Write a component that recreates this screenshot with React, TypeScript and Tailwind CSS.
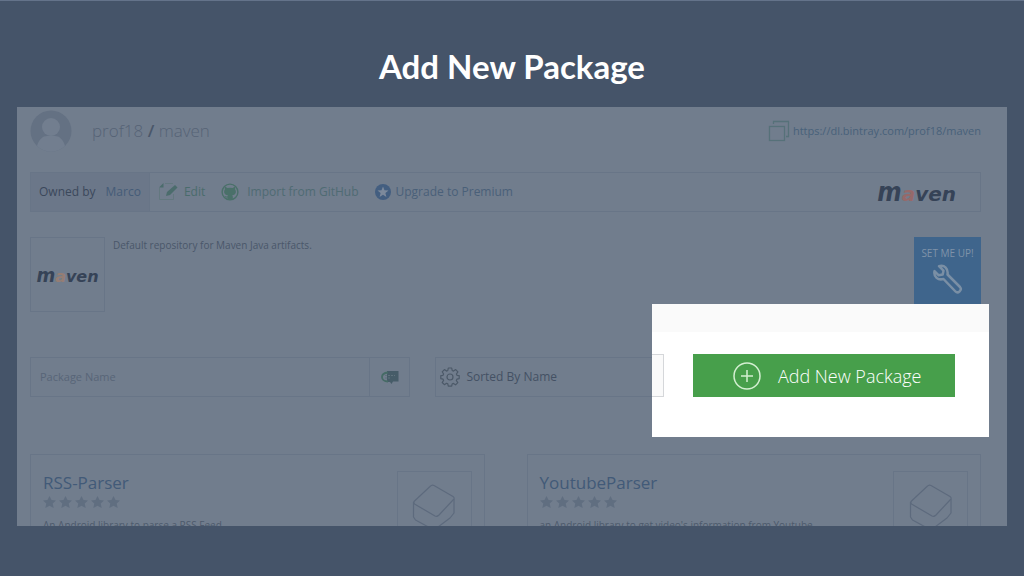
import React from "react";

const packages = [
  { name: "RSS-Parser", description: "An Android library to parse a RSS Feed" },
  { name: "YoutubeParser", description: "an Android library to get video's information from Youtube" },
];

const Avatar = () => (
  <svg className="h-[42px] w-[42px] shrink-0" viewBox="0 0 42 42" aria-hidden="true">
    <circle cx="21" cy="21" r="20.5" fill="#647183" />
    <circle cx="21" cy="17" r="9" fill="#727e8f" />
    <path d="M7 36c2-7 6-10 10-10h8c4 0 8 3 10 10a20 20 0 0 1-28 0z" fill="#727e8f" />
  </svg>
);

const CopyIcon = () => (
  <svg className="h-[22px] w-[22px]" viewBox="0 0 22 22" fill="none" stroke="#567179" strokeWidth="1.300" aria-hidden="true">
    <path d="M5.500 4V1.500h15v15H18" />
    <rect x="1.500" y="6.500" width="15" height="14" />
  </svg>
);

const EditIcon = () => (
  <svg className="h-5 w-5" viewBox="0 0 20 20" fill="none" aria-hidden="true">
    <path d="M7 1.500h8M1.500 6v11.500h14V12" stroke="#63787f" />
    <path d="M1 5.500L5.500 1v4.500z" fill="#4b6c6c" />
    <path d="M8 14l1-4 8-7 2.500 2.500-7.500 7.500z" fill="#4b6c6c" />
  </svg>
);

const GithubIcon = () => (
  <svg className="h-[18px] w-[18px]" viewBox="0 0 18 18" aria-hidden="true">
    <circle cx="9" cy="9" r="7.900" fill="none" stroke="#4a7069" strokeWidth="1.400" />
    <path
      d="M4.200 3.800l2.300 1.200a9 9 0 0 1 5 0l2.300-1.200c.5 1 .4 1.900.2 2.400 2 3 .5 5.800-2.800 6.100.5.600.6 1 .6 1.800V16.500H6.500v-2c-2 .2-2.500-1-3-1.800 1 .2 1.600 1 3 .8 0-.5.200-.9.500-1.200C3.600 12 2 9.200 4 6.200c-.2-.5-.3-1.400.2-2.400z"
      fill="#4a7069"
    />
  </svg>
);

const PremiumIcon = () => (
  <svg className="h-4 w-4" viewBox="0 0 16 16" aria-hidden="true">
    <circle cx="8" cy="8" r="8" fill="#435e80" />
    <path d="M8 2.500l1.500 3.700 4 .3-3.100 2.500 1 3.900L8 10.800l-3.400 2.100 1-3.900-3.100-2.500 4-.3z" fill="#7c899b" />
  </svg>
);

const WrenchIcon = () => (
  <svg
    className="h-[30px] w-[30px]"
    viewBox="0 0 30 30"
    fill="none"
    stroke="#7a8fa5"
    strokeWidth="2.500"
    strokeLinejoin="round"
    aria-hidden="true"
  >
    <path d="M6 2.200l4.500 4.500-.8 3.800-4 .8L1.500 7.200C.5 13 5 16.500 10.500 15l12 12.500c2.500 2.500 7-1.500 4.500-4.500L14.500 10.500C15.500 5 11.500.5 6 2.200z" />
  </svg>
);

const TagIcon = () => (
  <svg className="h-[15px] w-[18px]" viewBox="0 0 18 15" aria-hidden="true">
    <path d="M6 1h11.500v10.500H12L10.500 14 9 12H6z" fill="#465c68" />
    <path d="M7 2.500C2.500 3 1 4.800 1 7s2 4.500 6 4.500" fill="none" stroke="#466b66" strokeWidth="1.800" />
    <path d="M4 5.500h10M4 8h6" stroke="#5f727c" strokeDasharray="2 1" />
  </svg>
);

const GearIcon = () => (
  <svg
    className="h-5 w-5 shrink-0"
    viewBox="0 0 20 20"
    fill="none"
    stroke="#4c5968"
    strokeWidth="1.200"
    strokeLinejoin="round"
    aria-hidden="true"
  >
    <path d="M8.300 1h3.400l.5 2.500 1.300.6 2.200-1.500 2.200 2.200-1.500 2.200.6 1.300 2.200.4v2.900l-2.300.6-.6 1.300 1.500 2.100-2.200 2.200-2.200-1.400-1.300.6-.4 2.200H8.300l-.5-2.300-1.300-.6-2.100 1.400-2.200-2.200 1.400-2.100-.6-1.300L.8 11.600V8.700L3 8.300l.6-1.300-1.400-2.200 2.200-2.200 2.100 1.500 1.300-.6z" />
    <circle cx="10" cy="10" r="3" />
  </svg>
);

const BoxIcon = () => (
  <svg
    className="h-[46px] w-11"
    viewBox="0 0 44 46"
    fill="none"
    stroke="#5d6a7d"
    strokeWidth="1.200"
    strokeLinejoin="round"
    aria-hidden="true"
  >
    <path d="M18 2.500q2-2 4-1l19 11q2 1.500.5 3L27 31q-2 2-4 1L2.500 20q-1.500-1.500 0-3z" />
    <path d="M1.500 18v15l2 3L22 46l16-12 4-5V15" />
  </svg>
);

const MavenLogo = ({ small = false }: { small?: boolean }) => (
  <span
    className={`font-['DejaVu_Sans'] font-bold italic leading-none text-[#364357] ${small ? "text-base" : "text-xl"}`}
  >
    <span className={`font-['DejaVu_Sans_Condensed','DejaVu_Sans'] ${small ? "text-xl" : "text-[26px]"}`}>m</span>
    <span className={small ? "text-[#957d74]" : "text-[#96696a]"}>a</span>ven
  </span>
);

const Stars = () => (
  <div className="flex gap-[3px]" aria-label="Rating">
    {[1, 2, 3, 4, 5].map((star) => (
      <svg key={star} className="h-[13px] w-[13px]" viewBox="0 0 13 13" aria-hidden="true">
        <path d="M6.500 0l2 4 4.500.5-3.300 3 1 4.500-4.200-2.200L2.300 12l1-4.500L0 4.500 4.500 4z" fill="#606e80" />
      </svg>
    ))}
  </div>
);

const PackageCard = ({ name, description }: { name: string; description: string }) => (
  <article className="flex h-[150px] flex-1 justify-between border border-[#687587] pl-3 pr-3 pt-4">
    <div className="flex flex-col">
      <a href="#" className="text-[17px] leading-6 text-[#425a78]">
        {name}
      </a>
      <div className="mt-px">
        <Stars />
      </div>
      <p className="mt-2 text-[10px] leading-4 text-[#4d5a6c]">{description}</p>
    </div>
    <div className="flex h-[75px] w-[75px] justify-center border border-[#687587] pt-3">
      <BoxIcon />
    </div>
  </article>
);

const App = () => {
  return (
    <main className="flex h-screen flex-col border-t border-[#64738a] bg-[#455469] px-[17px] pb-[50px] font-['Open_Sans',sans-serif]">
      <h1 className="pb-[21px] pt-[45px] text-center font-['Lato',sans-serif] text-[33px] font-bold leading-10 text-white">
        Add New Package
      </h1>

      <section className="relative min-h-0 flex-1 overflow-hidden bg-[#717d8d] pl-[13px] pr-[26px] pt-[3px]">
        {/* Repository name */}
        <header className="flex h-[42px] items-center">
          <Avatar />
          <h2 className="ml-5 flex-1 text-[17px] font-light leading-6 text-[#566376]">
            prof18 <span className="font-semibold text-[#4a576a]">/</span> maven
          </h2>
          <a href="#" className="flex items-center gap-[3px] text-[11px] text-[#48617a]">
            <CopyIcon />
            https://dl.bintray.com/prof18/maven
          </a>
        </header>

        {/* Toolbar */}
        <nav className="mt-5 flex h-10 items-center border border-[#687587] text-xs text-[#4a6079]">
          <div className="flex h-full items-center gap-2.5 border-r border-[#687587] bg-[#6b7789] px-2 text-[#3b485b]">
            Owned by
            <a href="#" className="text-[#455c78]">
              Marco
            </a>
          </div>
          <button type="button" className="ml-2 flex items-center gap-1.5 text-[#4a6c6c]">
            <EditIcon />
            Edit
          </button>
          <button type="button" className="ml-4 flex items-center gap-2 text-[#4f6b73]">
            <GithubIcon />
            Import from GitHub
          </button>
          <button type="button" className="ml-4 flex items-center gap-[5px]">
            <PremiumIcon />
            Upgrade to Premium
          </button>
          <div className="ml-auto mr-6">
            <MavenLogo />
          </div>
        </nav>

        {/* Description */}
        <div className="mt-[25px] flex items-start">
          <div className="flex h-[75px] w-[75px] items-center justify-center border border-[#687587]">
            <MavenLogo small />
          </div>
          <p className="ml-2 flex-1 text-[10px] leading-4 text-[#4a576a]">Default repository for Maven Java artifacts.</p>
          <button
            type="button"
            className="flex h-[68px] w-[67px] flex-col items-center bg-[#3f658c] pt-2 text-[10px] leading-4 text-[#7f93a9]"
          >
            SET ME UP!
            <span className="mt-[3px]">
              <WrenchIcon />
            </span>
          </button>
        </div>

        {/* Search and sorting */}
        <form className="mt-[45px] flex h-10 gap-[25px]">
          <div className="flex w-2/5 border border-[#687587]">
            <input
              type="text"
              aria-label="Package Name"
              placeholder="Package Name"
              className="min-w-0 flex-1 px-[9px] text-[11px] placeholder:text-[#586578]"
            />
            <button
              type="button"
              aria-label="Search packages"
              className="flex w-10 items-center justify-center border-l border-[#687587]"
            >
              <TagIcon />
            </button>
          </div>
          <label className="flex w-[24%] items-center gap-1.5 border border-[#687587] pl-1">
            <GearIcon />
            <select aria-label="Sort order" className="flex-1 appearance-none text-xs text-[#445164]">
              <option>Sorted By Name</option>
            </select>
          </label>
        </form>

        {/* Packages */}
        <div className="mt-[57px] flex gap-[42px]">
          {packages.map((item) => (
            <PackageCard key={item.name} name={item.name} description={item.description} />
          ))}
        </div>

        {/* Highlighted action */}
        <div className="absolute right-[18px] top-[197px] flex h-[133px] w-[34%] flex-col bg-white">
          <div className="h-[28px] bg-[#fafafa]" />
          <div className="mt-[22px] flex h-[43px]">
            <div className="w-3 border-y border-r border-[#d5d7da] bg-[#fafafa]" />
            <button
              type="button"
              className="ml-[29px] mr-[34px] flex flex-1 items-center justify-center gap-[17px] bg-[#479f4b] pl-1.5 text-lg font-light text-white"
            >
              <svg className="h-7 w-7" viewBox="0 0 28 28" fill="none" stroke="#d3efd1" strokeWidth="1.500" aria-hidden="true">
                <circle cx="14" cy="14" r="13" />
                <path d="M14 8v12M8 14h12" />
              </svg>
              Add New Package
            </button>
          </div>
        </div>
      </section>
    </main>
  );
};

export default App;
